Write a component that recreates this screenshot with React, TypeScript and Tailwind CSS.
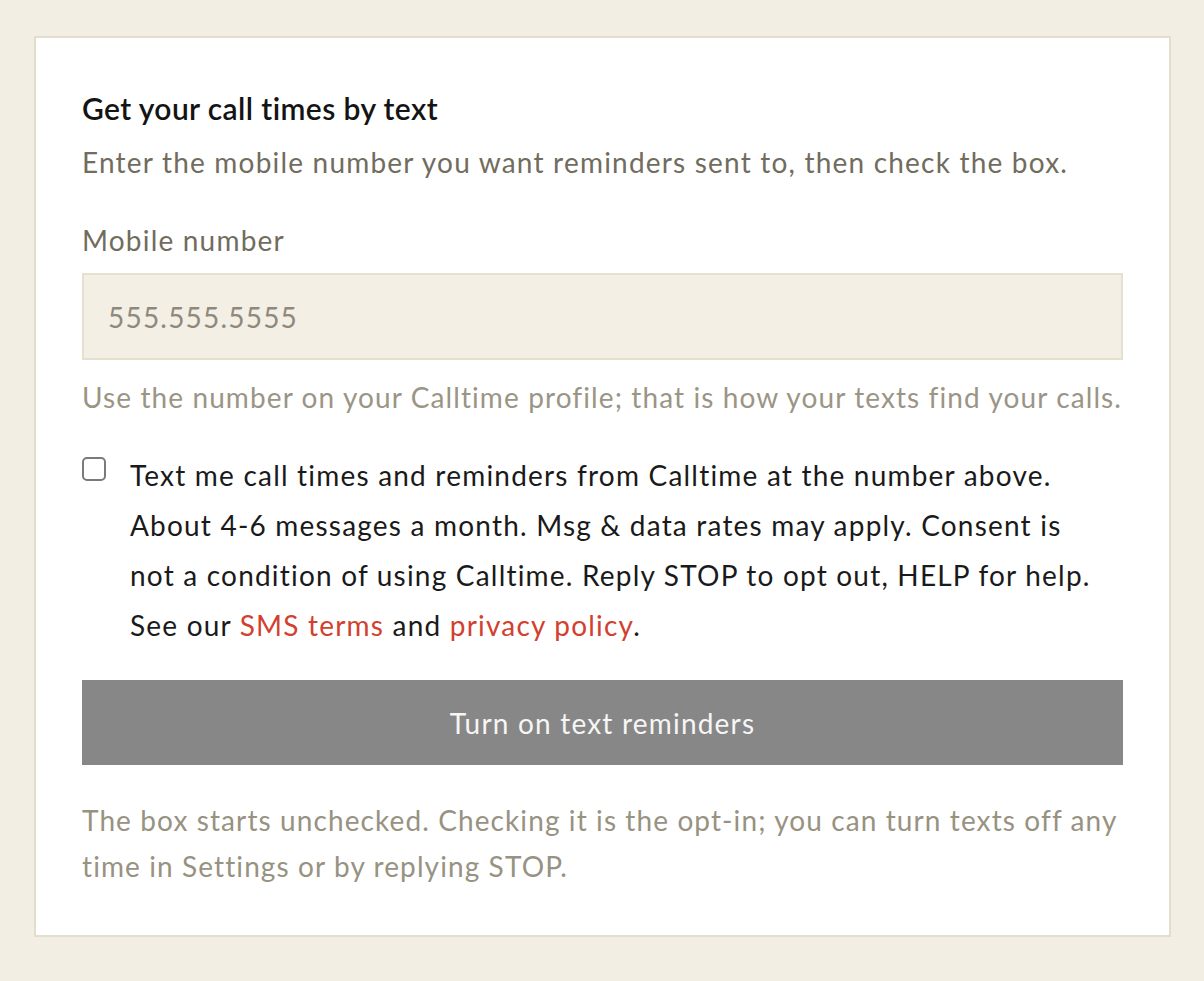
import React, { useState } from 'react';

const App: React.FC = () => {
  const [phone, setPhone] = useState('');
  const [agreed, setAgreed] = useState(false);

  return (
    <div className="min-h-screen bg-[#f2eee3] pt-[36px] pl-[34px] font-['Lato',sans-serif] tracking-[1.2px]">
      <div className="w-[1137px] border-2 border-[#e2ddcd] bg-white px-[46px] pt-[48px] pb-[46px]">
        <h2 className="text-[30px] leading-[44px] font-semibold tracking-[0.4px] text-[#141414]">
          Get your call times by text
        </h2>
        <p className="mt-[10px] text-[28px] leading-[44px] text-[#716c5e]">
          Enter the mobile number you want reminders sent to, then check the box.
        </p>

        <label htmlFor="mobile" className="mt-[34px] block text-[28px] leading-[44px] text-[#716c5e]">
          Mobile number
        </label>
        <input
          id="mobile"
          type="tel"
          value={phone}
          onChange={(e) => setPhone(e.target.value)}
          placeholder="555.555.5555"
          className="mt-[11px] block h-[87px] w-full border-2 border-[#e6e0cf] bg-[#f3efe4] px-[24px] text-[28px] tracking-[1.2px] text-[#141414] outline-none placeholder:text-[#8e897c]"
        />
        <p className="mt-[15px] whitespace-nowrap text-[28px] leading-[44px] tracking-[1.1px] text-[#9a9585]">
          Use the number on your Calltime profile; that is how your texts find your calls.
        </p>

        <label className="mt-[31px] flex gap-[24px] cursor-pointer">
          <input
            type="checkbox"
            checked={agreed}
            onChange={(e) => setAgreed(e.target.checked)}
            className="mt-[7px] h-[24px] w-[24px] shrink-0 appearance-none rounded-[5px] border-2 border-[#7a7a7a] bg-white checked:bg-[#d2402f] checked:border-[#d2402f]"
          />
          <span className="whitespace-nowrap text-[28px] leading-[50px] text-[#1a1a1a]">
            Text me call times and reminders from Calltime at the number above.
            <br />
            About 4-6 messages a month. Msg &amp; data rates may apply. Consent is
            <br />
            not a condition of using Calltime. Reply STOP to opt out, HELP for help.
            <br />
            See our <a href="#" className="text-[#d2402f]">SMS terms</a> and{' '}
            <a href="#" className="text-[#d2402f]">privacy policy</a>.
          </span>
        </label>

        <button
          type="button"
          disabled={!agreed}
          className="mt-[30px] flex h-[85px] w-full items-center justify-center bg-[#878787] text-[28px] tracking-[1.2px] text-[#f6f6f6]"
        >
          Turn on text reminders
        </button>

        <p className="mt-[32px] whitespace-nowrap text-[28px] leading-[46px] tracking-[1.1px] text-[#979281]">
          The box starts unchecked. Checking it is the opt-in; you can turn texts off any
          <br />
          time in Settings or by replying STOP.
        </p>
      </div>
    </div>
  );
};

export default App;
